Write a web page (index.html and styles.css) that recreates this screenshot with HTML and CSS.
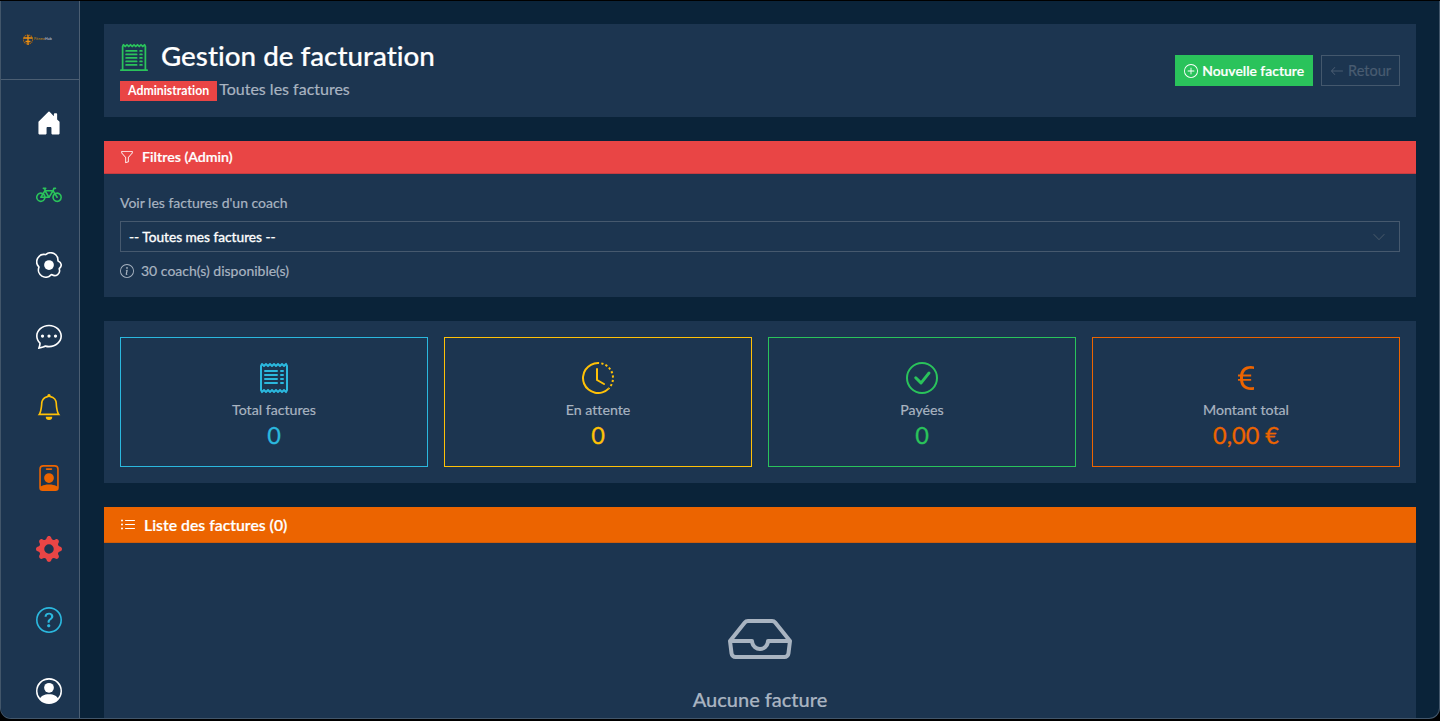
FILE: index.html
```html
<!DOCTYPE html>
<html lang="fr">
<head>
<meta charset="utf-8">
<title>Gestion de facturation</title>
<link rel="stylesheet" href="styles.css">
</head>
<body>
<div class="app">
  <aside class="sidebar">
    <div class="brand">
      <svg class="brand-mark" viewBox="0 0 12 12"><circle cx="6" cy="5.5" r="4.6" fill="none" stroke="#a8620f" stroke-width="1.1" stroke-dasharray="1.4 .6"/><path d="M1.5 4h9M6 1v10M3.5 7.5h5" stroke="#f0900f" stroke-width="1.3" fill="none"/></svg>
      <span class="brand-name"><span class="brand-a">Fitness</span><span class="brand-b">Hub</span></span>
    </div>
    <nav class="nav">
      <svg class="nav-icon c-white" viewBox="0 0 16 16"><path d="M6.5 14.5v-3.505c0-.245.25-.495.5-.495h2c.25 0 .5.25.5.5v3.5a.5.5 0 0 0 .5.5h4a.5.5 0 0 0 .5-.5v-7a.5.5 0 0 0-.146-.354L13 5.793V2.5a.5.5 0 0 0-.5-.5h-1a.5.5 0 0 0-.5.5v1.293L8.354 1.146a.5.5 0 0 0-.708 0l-6 6A.5.5 0 0 0 1.5 7.5v7a.5.5 0 0 0 .5.5h4a.5.5 0 0 0 .5-.5z"/></svg>
      <svg class="nav-icon c-green" viewBox="0 0 16 16"><path d="M4 4.5a.5.5 0 0 1 .5-.5H6a.5.5 0 0 1 0 1v.5h4.14l.386-1.158A.5.5 0 0 1 11 4h1a.5.5 0 0 1 0 1h-.64l-.311.935.807 1.29a3 3 0 1 1-.848.53l-.508-.812-2.076 3.322A.5.5 0 0 1 8 10.5H5.959a3 3 0 1 1-1.815-3.274L5 5.856V5h-.5a.5.5 0 0 1-.5-.5zm1.5 2.443-.508.814c.5.444.85 1.054.967 1.743h1.139L5.5 6.943zM8 9.057 9.598 6.5H6.402L8 9.057zM4.937 9.5a1.997 1.997 0 0 0-.487-.877l-.548.877h1.035zM3.603 8.092A2 2 0 1 0 4.937 10.5H3a.5.5 0 0 1-.424-.765l1.027-1.643zm7.947.53a2 2 0 1 0 .848-.53l1.026 1.643a.5.5 0 1 1-.848.53L11.55 8.623z"/></svg>
      <svg class="nav-icon c-white" viewBox="0 0 16 16"><path d="M8 11a3 3 0 1 0 0-6 3 3 0 0 0 0 6z"/><path d="M13.997 5.17a5 5 0 0 0-8.101-4.09A5 5 0 0 0 1.28 9.342a5 5 0 0 0 8.336 5.109 3.5 3.5 0 0 0 5.201-4.065 3.001 3.001 0 0 0-.822-5.216zm-1-.034a1 1 0 0 0 .668.977 2.001 2.001 0 0 1 .547 3.478 1 1 0 0 0-.341 1.113 2.5 2.5 0 0 1-3.715 2.905 1 1 0 0 0-1.262.152 4 4 0 0 1-6.67-4.087 1 1 0 0 0-.2-1 4 4 0 0 1 3.693-6.61 1 1 0 0 0 .8-.2 4 4 0 0 1 6.48 3.273z"/></svg>
      <svg class="nav-icon c-white" viewBox="0 0 16 16"><path d="M5 8a1 1 0 1 1-2 0 1 1 0 0 1 2 0zm4 0a1 1 0 1 1-2 0 1 1 0 0 1 2 0zm3 1a1 1 0 1 0 0-2 1 1 0 0 0 0 2z"/><path d="m2.165 15.803.02-.004c1.83-.363 2.948-.842 3.468-1.105A9.06 9.06 0 0 0 8 15c4.418 0 8-3.134 8-7s-3.582-7-8-7-8 3.134-8 7c0 1.76.743 3.37 1.97 4.6a10.437 10.437 0 0 1-.524 2.318l-.003.011a10.722 10.722 0 0 1-.244.637c-.079.186.074.394.273.362a21.673 21.673 0 0 0 .693-.125zm.8-3.108a1 1 0 0 0-.287-.801C1.618 10.83 1 9.468 1 8c0-3.192 3.004-6 7-6s7 2.808 7 6c0 3.193-3.004 6-7 6a8.06 8.06 0 0 1-2.088-.272 1 1 0 0 0-.711.074c-.387.196-1.24.57-2.634.893a10.97 10.97 0 0 0 .398-2z"/></svg>
      <svg class="nav-icon c-yellow" viewBox="0 0 16 16"><path d="M8 16a2 2 0 0 0 2-2H6a2 2 0 0 0 2 2zM8 1.918l-.797.161A4.002 4.002 0 0 0 4 6c0 .628-.134 2.197-.459 3.742-.16.767-.376 1.566-.663 2.258h10.244c-.287-.692-.502-1.49-.663-2.258C12.134 8.197 12 6.628 12 6a4.002 4.002 0 0 0-3.203-3.92L8 1.917zM14.22 12c.223.447.481.801.78 1H1c.299-.199.557-.553.78-1C2.68 10.2 3 6.88 3 6c0-2.42 1.72-4.44 4.005-4.901a1 1 0 1 1 1.99 0A5.002 5.002 0 0 1 13 6c0 .88.32 4.2 1.22 6z"/></svg>
      <svg class="nav-icon c-orange" viewBox="0 0 16 16"><path d="M6.5 2a.5.5 0 0 0 0 1h3a.5.5 0 0 0 0-1h-3zM11 8a3 3 0 1 1-6 0 3 3 0 0 1 6 0z"/><path d="M4.5 0A2.5 2.5 0 0 0 2 2.5V14a2 2 0 0 0 2 2h8a2 2 0 0 0 2-2V2.5A2.5 2.5 0 0 0 11.5 0h-7zM3 2.5A1.5 1.5 0 0 1 4.5 1h7A1.5 1.5 0 0 1 13 2.5v10.795a4.2 4.2 0 0 0-.776-.492C11.392 12.387 10.063 12 8 12s-3.392.387-4.224.803a4.2 4.2 0 0 0-.776.492V2.5z"/></svg>
      <svg class="nav-icon c-red" viewBox="0 0 16 16"><path d="M9.405 1.05c-.413-1.4-2.397-1.4-2.81 0l-.1.34a1.464 1.464 0 0 1-2.105.872l-.31-.17c-1.283-.698-2.686.705-1.987 1.987l.169.311c.446.82.023 1.841-.872 2.105l-.34.1c-1.4.413-1.4 2.397 0 2.81l.34.1a1.464 1.464 0 0 1 .872 2.105l-.17.31c-.698 1.283.705 2.686 1.987 1.987l.311-.169a1.464 1.464 0 0 1 2.105.872l.1.34c.413 1.4 2.397 1.4 2.81 0l.1-.34a1.464 1.464 0 0 1 2.105-.872l.31.17c1.283.698 2.686-.705 1.987-1.987l-.169-.311a1.464 1.464 0 0 1 .872-2.105l.34-.1c1.4-.413 1.4-2.397 0-2.81l-.34-.1a1.464 1.464 0 0 1-.872-2.105l.17-.31c.698-1.283-.705-2.686-1.987-1.987l-.311.169a1.464 1.464 0 0 1-2.105-.872l-.1-.34zM8 10.93a2.929 2.929 0 1 1 0-5.86 2.929 2.929 0 0 1 0 5.858z"/></svg>
      <svg class="nav-icon c-cyan" viewBox="0 0 16 16"><path d="M8 15A7 7 0 1 1 8 1a7 7 0 0 1 0 14zm0 1A8 8 0 1 0 8 0a8 8 0 0 0 0 16z"/><path d="M5.255 5.786a.237.237 0 0 0 .241.247h.825c.138 0 .248-.113.266-.25.09-.656.54-1.134 1.342-1.134.686 0 1.314.343 1.314 1.168 0 .635-.374.927-.965 1.371-.673.489-1.206 1.06-1.168 1.987l.003.217a.25.25 0 0 0 .25.246h.811a.25.25 0 0 0 .25-.25v-.105c0-.718.273-.927 1.01-1.486.609-.463 1.244-.977 1.244-2.056 0-1.511-1.276-2.241-2.673-2.241-1.267 0-2.655.59-2.75 2.286zm1.557 5.763c0 .533.425.927 1.01.927.609 0 1.028-.394 1.028-.927 0-.552-.42-.94-1.029-.94-.584 0-1.009.388-1.009.94z"/></svg>
      <svg class="nav-icon c-white" viewBox="0 0 16 16"><path d="M11 6a3 3 0 1 1-6 0 3 3 0 0 1 6 0z"/><path fill-rule="evenodd" d="M0 8a8 8 0 1 1 16 0A8 8 0 0 1 0 8zm8-7a7 7 0 0 0-5.468 11.37C3.242 11.226 4.805 10 8 10s4.757 1.225 5.468 2.37A7 7 0 0 0 8 1z"/></svg>
    </nav>
  </aside>

  <main class="main">
    <header class="panel page-head">
      <div class="head-left">
        <div class="title-row">
          <svg class="title-icon c-green" viewBox="0 0 16 16"><path d="M3 4.5a.5.5 0 0 1 .5-.5h6a.5.5 0 1 1 0 1h-6a.5.5 0 0 1-.5-.5zm0 2a.5.5 0 0 1 .5-.5h6a.5.5 0 1 1 0 1h-6a.5.5 0 0 1-.5-.5zm0 2a.5.5 0 0 1 .5-.5h6a.5.5 0 1 1 0 1h-6a.5.5 0 0 1-.5-.5zm0 2a.5.5 0 0 1 .5-.5h6a.5.5 0 0 1 0 1h-6a.5.5 0 0 1-.5-.5zm0 2a.5.5 0 0 1 .5-.5h6a.5.5 0 0 1 0 1h-6a.5.5 0 0 1-.5-.5zM11.5 4a.5.5 0 0 0 0 1h1a.5.5 0 0 0 0-1h-1zm0 2a.5.5 0 0 0 0 1h1a.5.5 0 0 0 0-1h-1zm0 2a.5.5 0 0 0 0 1h1a.5.5 0 0 0 0-1h-1zm0 2a.5.5 0 0 0 0 1h1a.5.5 0 0 0 0-1h-1zm0 2a.5.5 0 0 0 0 1h1a.5.5 0 0 0 0-1h-1z"/><path d="M2.354.646a.5.5 0 0 0-.801.13l-.5 1A.5.5 0 0 0 1 2v13H.5a.5.5 0 0 0 0 1h15a.5.5 0 0 0 0-1H15V2a.5.5 0 0 0-.053-.224l-.5-1a.5.5 0 0 0-.8-.13L13 1.293l-.646-.647a.5.5 0 0 0-.708 0L11 1.293l-.646-.647a.5.5 0 0 0-.708 0L9 1.293 8.354.646a.5.5 0 0 0-.708 0L7 1.293 6.354.646a.5.5 0 0 0-.708 0L5 1.293 4.354.646a.5.5 0 0 0-.708 0L3 1.293 2.354.646zm-.217 1.198.51.51a.5.5 0 0 0 .707 0L4 1.707l.646.647a.5.5 0 0 0 .708 0L6 1.707l.646.647a.5.5 0 0 0 .708 0L8 1.707l.646.647a.5.5 0 0 0 .708 0L10 1.707l.646.647a.5.5 0 0 0 .708 0L12 1.707l.646.647a.5.5 0 0 0 .708 0l.509-.51.137.274V15H2V2.118l.137-.274z"/></svg>
          <h1 class="title">Gestion de facturation</h1>
        </div>
        <div class="sub-row">
          <span class="badge">Administration</span><span class="subtitle">Toutes les factures</span>
        </div>
      </div>
      <div class="head-actions">
        <button class="btn btn-primary" type="button"><svg class="btn-icon" viewBox="0 0 16 16"><path d="M8 15A7 7 0 1 1 8 1a7 7 0 0 1 0 14zm0 1A8 8 0 1 0 8 0a8 8 0 0 0 0 16z"/><path d="M8 4a.5.5 0 0 1 .5.5v3h3a.5.5 0 0 1 0 1h-3v3a.5.5 0 0 1-1 0v-3h-3a.5.5 0 0 1 0-1h3v-3A.5.5 0 0 1 8 4z"/></svg>Nouvelle facture</button>
        <button class="btn btn-ghost" type="button"><svg class="btn-icon" viewBox="0 0 16 16"><path d="M15 8a.5.5 0 0 0-.5-.5H2.707l3.147-3.146a.5.5 0 1 0-.708-.708l-4 4a.5.5 0 0 0 0 .708l4 4a.5.5 0 0 0 .708-.708L2.707 8.5H14.5A.5.5 0 0 0 15 8z"/></svg>Retour</button>
      </div>
    </header>

    <section class="panel">
      <div class="bar bar-red">
        <svg class="bar-icon" viewBox="0 0 16 16"><path d="M1.5 1.5A.5.5 0 0 1 2 1h12a.5.5 0 0 1 .5.5v2a.5.5 0 0 1-.128.334L10 8.692V13.5a.5.5 0 0 1-.342.474l-3 1A.5.5 0 0 1 6 14.5V8.692L1.628 3.834A.5.5 0 0 1 1.5 3.5v-2zm1 .5v1.308l4.372 4.858A.5.5 0 0 1 7 8.5v5.306l2-.666V8.5a.5.5 0 0 1 .128-.334L13.5 3.308V2h-11z"/></svg>
        <span>Filtres (Admin)</span>
      </div>
      <div class="filter-body">
        <label class="field-label" for="coach">Voir les factures d'un coach</label>
        <div class="select" id="coach">
          <span>-- Toutes mes factures --</span>
          <svg class="chevron" viewBox="0 0 16 16"><path fill-rule="evenodd" d="M1.646 4.646a.5.5 0 0 1 .708 0L8 10.293l5.646-5.647a.5.5 0 0 1 .708.708l-6 6a.5.5 0 0 1-.708 0l-6-6a.5.5 0 0 1 0-.708z"/></svg>
        </div>
        <div class="hint">
          <svg class="hint-icon" viewBox="0 0 16 16"><path d="M8 15A7 7 0 1 1 8 1a7 7 0 0 1 0 14zm0 1A8 8 0 1 0 8 0a8 8 0 0 0 0 16z"/><path d="m8.93 6.588-2.29.287-.082.38.45.083c.294.07.352.176.288.469l-.738 3.468c-.194.897.105 1.319.808 1.319.545 0 1.178-.252 1.465-.598l.088-.416c-.2.176-.492.246-.686.246-.275 0-.375-.193-.304-.533L8.93 6.588zM9 4.5a1 1 0 1 1-2 0 1 1 0 0 1 2 0z"/></svg>
          <span>30 coach(s) disponible(s)</span>
        </div>
      </div>
    </section>

    <section class="panel stats">
      <div class="stat stat-cyan">
        <svg class="stat-icon" viewBox="0 0 16 16"><path d="M1.92.506a.5.5 0 0 1 .434.14L3 1.293l.646-.647a.5.5 0 0 1 .708 0L5 1.293l.646-.647a.5.5 0 0 1 .708 0L7 1.293l.646-.647a.5.5 0 0 1 .708 0L9 1.293l.646-.647a.5.5 0 0 1 .708 0l.646.647.646-.647a.5.5 0 0 1 .708 0l.646.647.646-.647a.5.5 0 0 1 .801.13l.5 1A.5.5 0 0 1 15 2v12a.5.5 0 0 1-.053.224l-.5 1a.5.5 0 0 1-.8.13L13 14.707l-.646.647a.5.5 0 0 1-.708 0L11 14.707l-.646.647a.5.5 0 0 1-.708 0L9 14.707l-.646.647a.5.5 0 0 1-.708 0L7 14.707l-.646.647a.5.5 0 0 1-.708 0L5 14.707l-.646.647a.5.5 0 0 1-.708 0L3 14.707l-.646.647a.5.5 0 0 1-.801-.13l-.5-1A.5.5 0 0 1 1 14V2a.5.5 0 0 1 .053-.224l.5-1a.5.5 0 0 1 .367-.27zm.217 1.338L2 2.118v11.764l.137.274.51-.51a.5.5 0 0 1 .707 0l.646.647.646-.646a.5.5 0 0 1 .708 0l.646.646.646-.646a.5.5 0 0 1 .708 0l.646.646.646-.646a.5.5 0 0 1 .708 0l.646.646.646-.646a.5.5 0 0 1 .708 0l.646.646.646-.646a.5.5 0 0 1 .708 0l.509.509.137-.274V2.118l-.137-.274-.51.51a.5.5 0 0 1-.707 0L12 1.707l-.646.647a.5.5 0 0 1-.708 0L10 1.707l-.646.647a.5.5 0 0 1-.708 0L8 1.707l-.646.647a.5.5 0 0 1-.708 0L6 1.707l-.646.647a.5.5 0 0 1-.708 0L4 1.707l-.646.647a.5.5 0 0 1-.708 0l-.509-.51z"/><path d="M3 4.5a.5.5 0 0 1 .5-.5h6a.5.5 0 1 1 0 1h-6a.5.5 0 0 1-.5-.5zm0 2a.5.5 0 0 1 .5-.5h6a.5.5 0 1 1 0 1h-6a.5.5 0 0 1-.5-.5zm0 2a.5.5 0 0 1 .5-.5h6a.5.5 0 1 1 0 1h-6a.5.5 0 0 1-.5-.5zm0 2a.5.5 0 0 1 .5-.5h6a.5.5 0 0 1 0 1h-6a.5.5 0 0 1-.5-.5zm8-6a.5.5 0 0 1 .5-.5h1a.5.5 0 0 1 0 1h-1a.5.5 0 0 1-.5-.5zm0 2a.5.5 0 0 1 .5-.5h1a.5.5 0 0 1 0 1h-1a.5.5 0 0 1-.5-.5zm0 2a.5.5 0 0 1 .5-.5h1a.5.5 0 0 1 0 1h-1a.5.5 0 0 1-.5-.5zm0 2a.5.5 0 0 1 .5-.5h1a.5.5 0 0 1 0 1h-1a.5.5 0 0 1-.5-.5z"/></svg>
        <div class="stat-label">Total factures</div>
        <div class="stat-value">0</div>
      </div>
      <div class="stat stat-yellow">
        <svg class="stat-icon" viewBox="0 0 16 16"><path d="M8.515 1.019A7 7 0 0 0 8 1V0a8 8 0 0 1 .589.022l-.074.997zm2.004.45a7.003 7.003 0 0 0-.985-.299l.219-.976c.383.086.76.2 1.126.342l-.36.933zm1.37.71a7.01 7.01 0 0 0-.439-.27l.493-.87a8.025 8.025 0 0 1 .979.654l-.615.789a6.996 6.996 0 0 0-.418-.302zm1.834 1.79a6.99 6.99 0 0 0-.653-.796l.724-.69c.27.285.52.59.747.91l-.818.576zm.744 1.352a7.08 7.08 0 0 0-.214-.468l.893-.45a7.976 7.976 0 0 1 .45 1.088l-.95.313a7.023 7.023 0 0 0-.179-.483zm.53 2.507a6.991 6.991 0 0 0-.1-1.025l.985-.17c.067.386.106.778.116 1.17l-1 .025zm-.131 1.538c.033-.17.06-.339.081-.51l.993.123a7.957 7.957 0 0 1-.23 1.155l-.964-.267c.046-.165.086-.332.12-.501zm-.952 2.379c.184-.29.346-.594.486-.908l.914.405c-.16.36-.345.706-.555 1.038l-.845-.535zm-.964 1.205c.122-.122.239-.248.35-.378l.758.653a8.073 8.073 0 0 1-.401.432l-.707-.707z"/><path d="M8 1a7 7 0 1 0 4.95 11.95l.707.707A8.001 8.001 0 1 1 8 0v1z"/><path d="M7.5 3a.5.5 0 0 1 .5.5v5.21l3.248 1.856a.5.5 0 0 1-.496.868l-3.5-2A.5.5 0 0 1 7 9V3.5a.5.5 0 0 1 .5-.5z"/></svg>
        <div class="stat-label">En attente</div>
        <div class="stat-value">0</div>
      </div>
      <div class="stat stat-green">
        <svg class="stat-icon" viewBox="0 0 16 16"><path d="M8 15A7 7 0 1 1 8 1a7 7 0 0 1 0 14zm0 1A8 8 0 1 0 8 0a8 8 0 0 0 0 16z"/><path d="M10.97 4.97a.235.235 0 0 0-.02.022L7.477 9.417 5.384 7.323a.75.75 0 0 0-1.06 1.06L6.97 11.03a.75.75 0 0 0 1.079-.02l3.992-4.99a.75.75 0 0 0-1.071-1.05z"/></svg>
        <div class="stat-label">Payées</div>
        <div class="stat-value">0</div>
      </div>
      <div class="stat stat-orange">
        <svg class="stat-icon" viewBox="0 0 16 16"><path d="M4 9.42h1.063C5.4 12.323 7.317 14 10.34 14c.622 0 1.167-.068 1.659-.185v-1.3c-.484.119-1.045.17-1.659.17-2.1 0-3.455-1.198-3.775-3.264h4.017v-.928H6.497v-.936c0-.11 0-.219.008-.329h4.078v-.927H6.618c.388-1.898 1.719-2.985 3.723-2.985.614 0 1.175.05 1.659.177V2.194A6.617 6.617 0 0 0 10.341 2c-2.928 0-4.82 1.569-5.244 4.3H4v.928h1.01v1.265H4v.928z"/></svg>
        <div class="stat-label">Montant total</div>
        <div class="stat-value">0,00 €</div>
      </div>
    </section>

    <section class="panel list-panel">
      <div class="bar bar-orange">
        <svg class="bar-icon-lg" viewBox="0 0 16 16"><path fill-rule="evenodd" d="M5 11.5a.5.5 0 0 1 .5-.5h9a.5.5 0 0 1 0 1h-9a.5.5 0 0 1-.5-.5zm0-4a.5.5 0 0 1 .5-.5h9a.5.5 0 0 1 0 1h-9a.5.5 0 0 1-.5-.5zm0-4a.5.5 0 0 1 .5-.5h9a.5.5 0 0 1 0 1h-9a.5.5 0 0 1-.5-.5zm-3 1a1 1 0 1 0 0-2 1 1 0 0 0 0 2zm0 4a1 1 0 1 0 0-2 1 1 0 0 0 0 2zm0 4a1 1 0 1 0 0-2 1 1 0 0 0 0 2z"/></svg>
        <span>Liste des factures (0)</span>
      </div>
      <div class="empty">
        <svg class="empty-icon" viewBox="0 0 16 16"><path d="M4.98 4a.5.5 0 0 0-.39.188L1.54 8H6a.5.5 0 0 1 .5.5 1.5 1.5 0 1 0 3 0A.5.5 0 0 1 10 8h4.46l-3.05-3.812A.5.5 0 0 0 11.02 4H4.98zm9.954 5H10.45a2.5 2.5 0 0 1-4.9 0H1.066l.32 2.562a.5.5 0 0 0 .497.438h12.234a.5.5 0 0 0 .496-.438L14.933 9zM3.809 3.563A1.5 1.5 0 0 1 4.981 3h6.038a1.5 1.5 0 0 1 1.172.563l3.7 4.625a.5.5 0 0 1 .105.374l-.39 3.124A1.5 1.5 0 0 1 14.117 13H1.883a1.5 1.5 0 0 1-1.489-1.314l-.39-3.124a.5.5 0 0 1 .106-.374l3.7-4.625z"/></svg>
        <h2 class="empty-title">Aucune facture</h2>
      </div>
    </section>
  </main>
</div>
</body>
</html>
```

FILE: styles.css
```css
* { box-sizing: border-box; }

html, body {
  margin: 0;
  height: 100%;
  overflow: hidden;
  background: #000;
}

body {
  padding-top: 1px;
  padding-bottom: 2px;
  font-family: Lato, "Noto Sans", sans-serif;
  font-variant-ligatures: none;
  color: #fff;
  -webkit-text-stroke: .2px currentColor;
}

svg { fill: currentColor; display: block; flex: none; }

.c-white { color: #fff; }
.c-green { color: #2ac35b; }
.c-yellow { color: #ffc107; }
.c-orange { color: #ec6400; }
.c-red { color: #e94545; }
.c-cyan { color: #2bb8de; }

.app {
  display: flex;
  height: 100%;
  overflow: hidden;
  border: 1px solid #42566a;
  border-top: 0;
  border-radius: 0 0 11px 11px;
  background: #0a2339;
}

.sidebar {
  flex: none;
  width: 79px;
  background: #1c3550;
  border-right: 1px solid #4b5e72;
}

.brand {
  height: 79px;
  padding: 0 0 1px 21px;
  display: flex;
  align-items: center;
  gap: 0;
  border-bottom: 1px solid #4b5e72;
}

.brand-mark { width: 12px; height: 12px; }

.brand-name {
  font-size: 3.5px;
  font-weight: 700;
  line-height: 1;
  -webkit-text-stroke: 0;
}
.brand-a { color: #a8761c; }
.brand-b { color: #a9b5c2; }

.nav {
  display: flex;
  flex-direction: column;
  align-items: flex-start;
  gap: 45px;
  padding: 30px 0 0 35px;
}

.nav-icon { width: 26px; height: 26px; }

.main {
  flex: 1;
  min-width: 0;
  padding: 23px 23px 0 24px;
  display: flex;
  flex-direction: column;
  gap: 24px;
  overflow: hidden;
}

.panel {
  flex: none;
  background: #1c3550;
}

.page-head {
  height: 93px;
  padding: 16px;
  display: flex;
  justify-content: space-between;
  align-items: center;
}

.head-left {
  display: flex;
  flex-direction: column;
  gap: 7px;
}

.title-row {
  display: flex;
  align-items: center;
  gap: 13px;
}

.title-icon { width: 28px; height: 28px; }

.title {
  margin: 0;
  font-size: 27.8px;
  line-height: 32px;
  padding-bottom: 2px;
  font-weight: 500;
  color: #fff;
}

.sub-row {
  display: flex;
  align-items: flex-start;
  gap: 2px;
  height: 20px;
}

.badge {
  background: #e94545;
  color: #fff;
  font-size: 12.3px;
  font-weight: 700;
  line-height: 20px;
  padding: 0 8px;
  -webkit-text-stroke: 0;
}

.subtitle {
  font-size: 16px;
  line-height: 16px;
  color: #a9b4c1;
}

.head-actions {
  display: flex;
  gap: 8px;
}

.btn {
  display: flex;
  align-items: center;
  gap: 4px;
  height: 31px;
  padding: 0 8px;
  font: 600 13.9px Lato, sans-serif;
  border: 1px solid transparent;
  border-radius: 0;
}

.btn-icon { width: 14px; height: 14px; }

.btn-primary {
  background: #2ac35b;
  color: #fff;
}

.btn-ghost {
  background: transparent;
  border-color: #44586d;
  color: #495c71;
  font-size: 14.5px;
  font-weight: 400;
}

.bar {
  display: flex;
  align-items: center;
  gap: 8px;
  padding: 0 16px;
  font-size: 14.2px;
  font-weight: 600;
  color: #fff;
}

.bar-red {
  height: 33px;
  padding-bottom: 1px;
  background: #e94545;
  border-bottom: 1px solid #c63c40;
}

.bar-orange {
  height: 36px;
  background: #ec6400;
  border-bottom: 1px solid #d05c08;
  font-size: 15.8px;
}

.bar-icon { width: 14px; height: 14px; }
.bar-icon-lg { width: 16px; height: 16px; }

.filter-body {
  padding: 20px 16px 0;
  height: 123px;
}

.field-label {
  display: block;
  font-size: 14px;
  line-height: 18px;
  color: #a9b4c1;
  margin-bottom: 9px;
}

.select {
  height: 31px;
  display: flex;
  align-items: center;
  justify-content: space-between;
  padding: 0 13px 0 8px;
  border: 1px solid #46596e;
  font-size: 13.7px;
  color: #fff;
  -webkit-text-stroke: .35px currentColor;
}

.chevron { width: 14px; height: 14px; color: #3f5164; }

.hint {
  display: flex;
  align-items: center;
  gap: 7px;
  margin-top: 10px;
  font-size: 14px;
  line-height: 18px;
  color: #a9b4c1;
}

.hint-icon { width: 14px; height: 14px; }

.stats {
  padding: 16px;
  display: grid;
  grid-template-columns: repeat(4, 1fr);
  gap: 16px;
}

.stat {
  height: 130px;
  border: 1px solid currentColor;
  display: flex;
  flex-direction: column;
  align-items: center;
  padding-top: 24px;
}

.stat-cyan { color: #2bb8de; }
.stat-yellow { color: #ffc107; }
.stat-green { color: #2ac35b; }
.stat-orange { color: #ec6400; }

.stat-icon { width: 32px; height: 32px; }

.stat-label {
  margin-top: 7px;
  font-size: 14.2px;
  line-height: 18px;
  color: #a9b4c1;
}

.stat-value {
  margin-top: 2px;
  font-size: 23.5px;
  line-height: 29px;
  -webkit-text-stroke: .3px currentColor;
}

.list-panel { flex: 1 0 auto; }

.empty {
  display: flex;
  flex-direction: column;
  align-items: center;
  padding-top: 64px;
}

.empty-icon { width: 64px; height: 64px; color: #a9b4c1; }

.empty-title {
  margin: 12px 0 0;
  font-size: 20px;
  line-height: 32px;
  font-weight: 500;
  color: #a9b4c1;
}
```
